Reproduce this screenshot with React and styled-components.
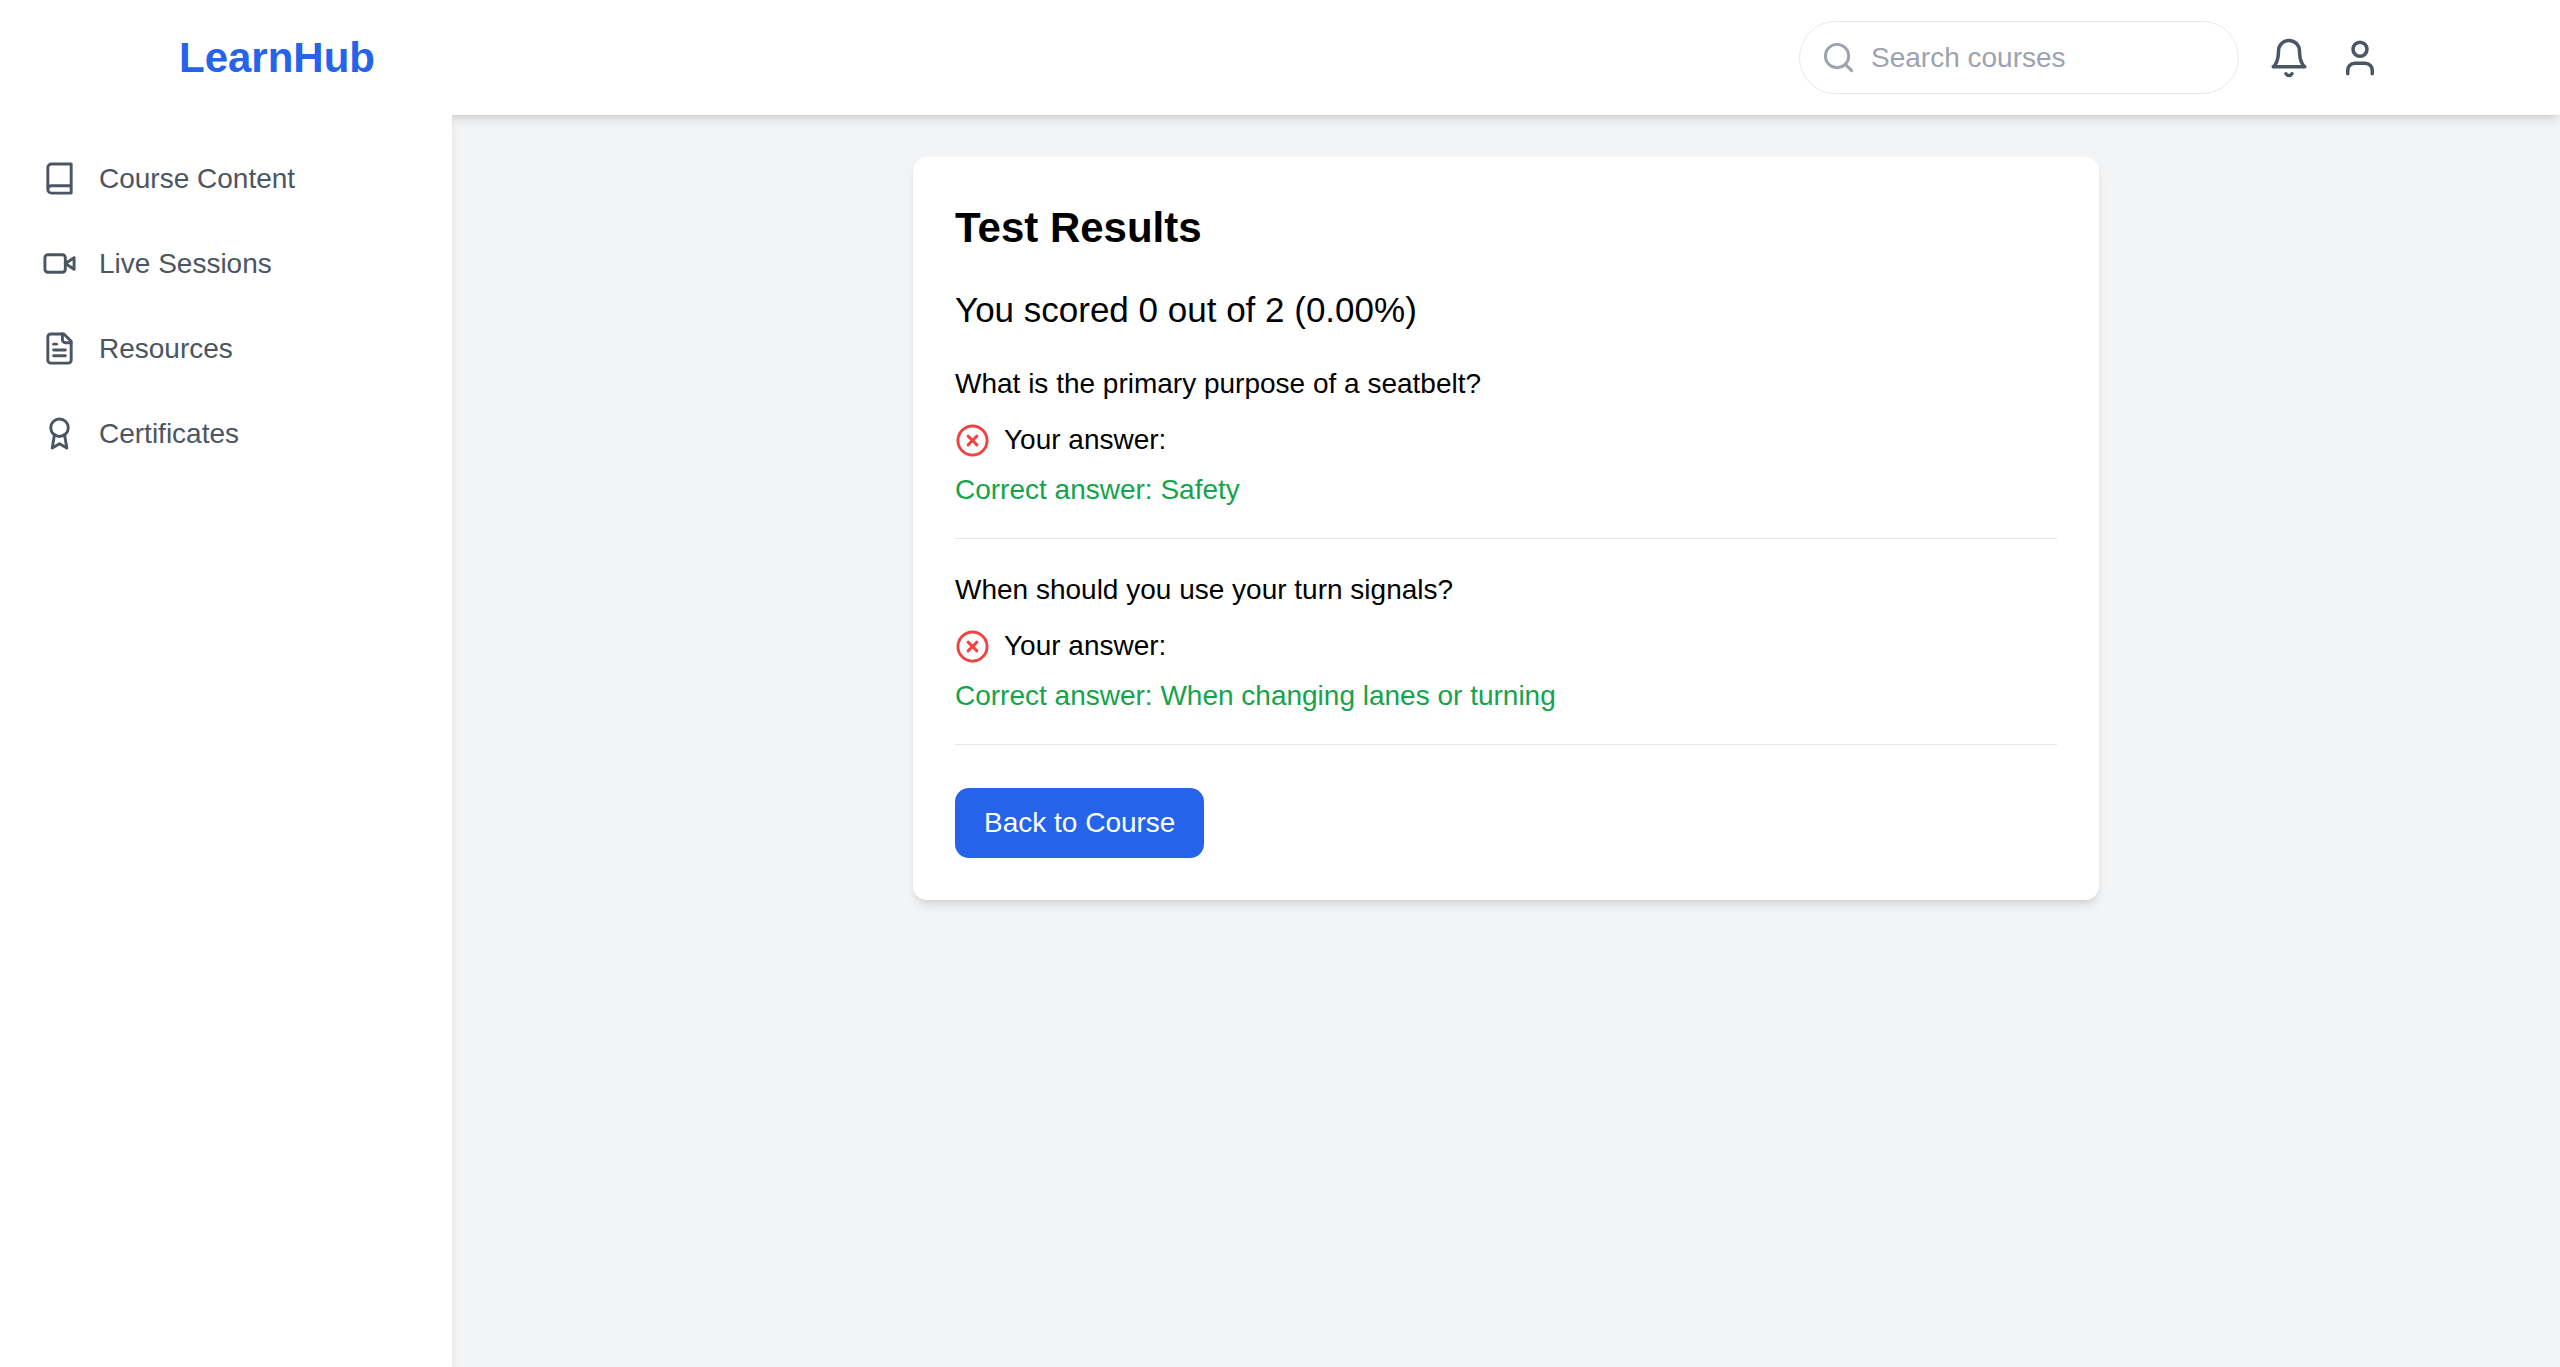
import React from "react";
import styled, { createGlobalStyle } from "styled-components";

const color = {
  page: "#f3f4f6",
  surface: "#ffffff",
  brand: "#2563eb",
  muted: "#4b5563",
  faint: "#9ca3af",
  line: "#e5e7eb",
  correct: "#16a34a",
  wrong: "#ef4444",
};

const shadow =
  "0 7px 11px -2px rgb(0 0 0 / 0.1), 0 4px 7px -4px rgb(0 0 0 / 0.1)";

const GlobalStyle = createGlobalStyle`
  *, *::before, *::after { box-sizing: border-box; }
  body {
    margin: 0;
    background: ${color.page};
    color: #000;
    font-family: "Liberation Sans", Arial, sans-serif;
    font-size: 28px;
    line-height: 42px;
  }
  h1, h2, p, ul, ol { margin: 0; padding: 0; }
  ul, ol { list-style: none; }
  button, input { font: inherit; }
`;

const Page = styled.div`
  display: flex;
  flex-direction: column;
  min-height: 100vh;
`;

const Header = styled.header`
  background: ${color.surface};
  box-shadow: ${shadow};
`;

const HeaderInner = styled.div`
  display: flex;
  align-items: center;
  justify-content: space-between;
  max-width: 2260px;
  margin: 0 auto;
  padding: 21px 29px;
`;

const Logo = styled.a`
  color: ${color.brand};
  font-size: 42px;
  font-weight: 700;
  line-height: 56px;
  text-decoration: none;
`;

const Tools = styled.div`
  display: flex;
  align-items: center;
  gap: 29px;
`;

const SearchBox = styled.label`
  display: flex;
  align-items: center;
  gap: 15px;
  width: 440px;
  padding: 14px 21px;
  border: 1px solid ${color.line};
  border-radius: 40px;
  color: ${color.faint};
`;

const SearchInput = styled.input`
  flex: 1;
  min-width: 0;
  height: 43px;
  padding: 0;
  border: 0;
  outline: 0;
  background: transparent;
  color: ${color.muted};
  &::placeholder {
    color: ${color.faint};
    opacity: 1;
  }
`;

const IconButton = styled.button`
  display: flex;
  padding: 0;
  border: 0;
  background: none;
  color: ${color.muted};
  cursor: pointer;
`;

const Glyph = styled.svg`
  flex: none;
  width: ${({ $size }) => $size}px;
  height: ${({ $size }) => $size}px;
  fill: none;
  stroke: currentColor;
  stroke-width: 2;
  stroke-linecap: round;
  stroke-linejoin: round;
`;

const Body = styled.div`
  display: flex;
  flex: 1;
`;

const Sidebar = styled.nav`
  flex: none;
  width: 452px;
  padding: 28px;
  background: ${color.surface};
  box-shadow: ${shadow};
`;

const NavList = styled.ul`
  display: flex;
  flex-direction: column;
  gap: 14px;
`;

const NavLink = styled.a`
  display: flex;
  align-items: center;
  gap: 22px;
  padding: 14px;
  border-radius: 14px;
  color: ${color.muted};
  line-height: 43px;
  text-decoration: none;
`;

const Main = styled.main`
  flex: 1;
  min-width: 0;
  padding: 42px;
`;

const Card = styled.section`
  max-width: 1186px;
  margin: 0 auto;
  padding: 42px;
  border-radius: 14px;
  background: ${color.surface};
  box-shadow: ${shadow};
`;

const Title = styled.h1`
  margin-bottom: 29px;
  font-size: 42px;
  font-weight: 700;
  line-height: 57px;
`;

const Score = styled.p`
  margin-bottom: 28px;
  font-size: 35px;
  line-height: 50px;
`;

const Questions = styled.ol`
  display: flex;
  flex-direction: column;
  gap: 30px;
  margin-bottom: 43px;
`;

const Question = styled.li`
  padding-bottom: 27px;
  border-bottom: 1px solid ${color.line};
`;

const Prompt = styled.p`
  margin-bottom: 14px;
`;

const Answer = styled.div`
  display: flex;
  align-items: center;
  gap: 14px;
  margin-bottom: 8px;
`;

const WrongMark = styled.span`
  display: flex;
  color: ${color.wrong};
`;

const CorrectAnswer = styled.p`
  color: ${color.correct};
`;

const PrimaryButton = styled.button`
  display: block;
  padding: 14px 29px;
  border: 0;
  border-radius: 14px;
  background: ${color.brand};
  color: #fff;
  line-height: 42px;
  cursor: pointer;
`;

const shapes = {
  search: (
    <>
      <circle cx="11" cy="11" r="8" />
      <path d="m21 21-4.3-4.3" />
    </>
  ),
  bell: (
    <>
      <path d="M6 8a6 6 0 0 1 12 0c0 7 3 9 3 9H3s3-2 3-9" />
      <path d="M10.3 21a1.94 1.94 0 0 0 3.4 0" />
    </>
  ),
  user: (
    <>
      <path d="M19 21v-2a4 4 0 0 0-4-4H9a4 4 0 0 0-4 4v2" />
      <circle cx="12" cy="7" r="4" />
    </>
  ),
  book: (
    <path d="M4 19.5v-15A2.5 2.5 0 0 1 6.5 2H20v20H6.5a2.5 2.5 0 0 1 0-5H20" />
  ),
  video: (
    <>
      <path d="m22 8-6 4 6 4V8Z" />
      <rect x="2" y="6" width="14" height="12" rx="2" />
    </>
  ),
  file: (
    <>
      <path d="M15 2H6a2 2 0 0 0-2 2v16a2 2 0 0 0 2 2h12a2 2 0 0 0 2-2V7Z" />
      <path d="M14 2v4a2 2 0 0 0 2 2h4" />
      <path d="M10 9H8" />
      <path d="M16 13H8" />
      <path d="M16 17H8" />
    </>
  ),
  award: (
    <>
      <circle cx="12" cy="8" r="6" />
      <path d="M15.477 12.89 17 22l-5-3-5 3 1.523-9.11" />
    </>
  ),
  wrong: (
    <>
      <circle cx="12" cy="12" r="10" />
      <path d="m15 9-6 6" />
      <path d="m9 9 6 6" />
    </>
  ),
};

function Icon({ name, size = 35 }) {
  return (
    <Glyph $size={size} viewBox="0 0 24 24" aria-hidden="true">
      {shapes[name]}
    </Glyph>
  );
}

const navItems = [
  { icon: "book", label: "Course Content" },
  { icon: "video", label: "Live Sessions" },
  { icon: "file", label: "Resources" },
  { icon: "award", label: "Certificates" },
];

const results = [
  {
    prompt: "What is the primary purpose of a seatbelt?",
    given: "",
    correct: "Safety",
  },
  {
    prompt: "When should you use your turn signals?",
    given: "",
    correct: "When changing lanes or turning",
  },
];

export default function App() {
  const score = results.filter((r) => r.given === r.correct).length;
  const percent = ((score / results.length) * 100).toFixed(2);

  return (
    <>
      <GlobalStyle />
      <Page>
        <Header>
          <HeaderInner>
            <Logo href="#">LearnHub</Logo>
            <Tools>
              <SearchBox htmlFor="course-search">
                <Icon name="search" />
                <SearchInput
                  id="course-search"
                  type="text"
                  placeholder="Search courses"
                  aria-label="Search courses"
                />
              </SearchBox>
              <IconButton type="button" aria-label="Notifications">
                <Icon name="bell" size={42} />
              </IconButton>
              <IconButton type="button" aria-label="Account">
                <Icon name="user" size={42} />
              </IconButton>
            </Tools>
          </HeaderInner>
        </Header>
        <Body>
          <Sidebar>
            <NavList>
              {navItems.map((item) => (
                <li key={item.label}>
                  <NavLink href="#">
                    <Icon name={item.icon} />
                    {item.label}
                  </NavLink>
                </li>
              ))}
            </NavList>
          </Sidebar>
          <Main>
            <Card>
              <Title>Test Results</Title>
              <Score>
                {`You scored ${score} out of ${results.length} (${percent}%)`}
              </Score>
              <Questions>
                {results.map((r) => (
                  <Question key={r.prompt}>
                    <Prompt>{r.prompt}</Prompt>
                    <Answer>
                      <WrongMark>
                        <Icon name="wrong" />
                      </WrongMark>
                      <span>{`Your answer: ${r.given}`}</span>
                    </Answer>
                    <CorrectAnswer>{`Correct answer: ${r.correct}`}</CorrectAnswer>
                  </Question>
                ))}
              </Questions>
              <PrimaryButton type="button">Back to Course</PrimaryButton>
            </Card>
          </Main>
        </Body>
      </Page>
    </>
  );
}
